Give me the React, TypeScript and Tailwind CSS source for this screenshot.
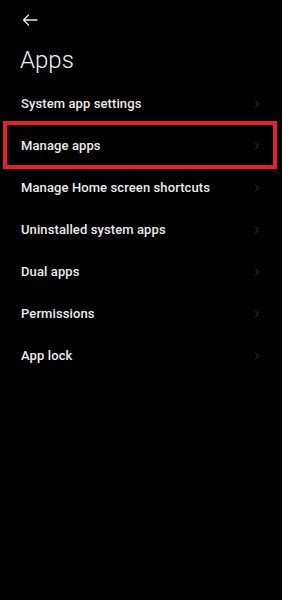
import { ChevronRight } from 'lucide-react';

const items = [
  'System app settings',
  'Manage apps',
  'Manage Home screen shortcuts',
  'Uninstalled system apps',
  'Dual apps',
  'Permissions',
  'App lock',
];

export default function App() {
  return (
    <div className="min-h-[600px] w-[282px] bg-black text-white font-['Roboto',sans-serif]">
      <div className="pt-[14px] pl-[22px] h-[30px]">
        <svg width="16" height="12" viewBox="0 0 16 12" fill="none" stroke="#e8e8e8" strokeWidth="1.3" strokeLinecap="round" strokeLinejoin="round">
          <path d="M15 6H1.5M6.5 1L1.5 6l5 5" />
        </svg>
      </div>
      <h1 className="mt-[15px] pl-[20px] text-[24px] leading-[30px] font-light text-[#f2f2f2]">Apps</h1>
      <div className="mt-[8px]">
        {items.map((label) => (
          <div key={label} className="relative flex items-center justify-between h-[42px] pl-[21px] pr-[19px]">
            <span className="text-[13px] font-medium text-[#ececec] tracking-[0.1px]">{label}</span>
            <ChevronRight className="w-[12px] h-[12px] text-[#555555]" strokeWidth={1.5} />
            {label === 'Manage apps' && (
              <span className="absolute left-[3px] right-[5px] top-[-4px] bottom-[-2px] border-[4px] border-[#e3202b]" />
            )}
          </div>
        ))}
      </div>
    </div>
  );
}
